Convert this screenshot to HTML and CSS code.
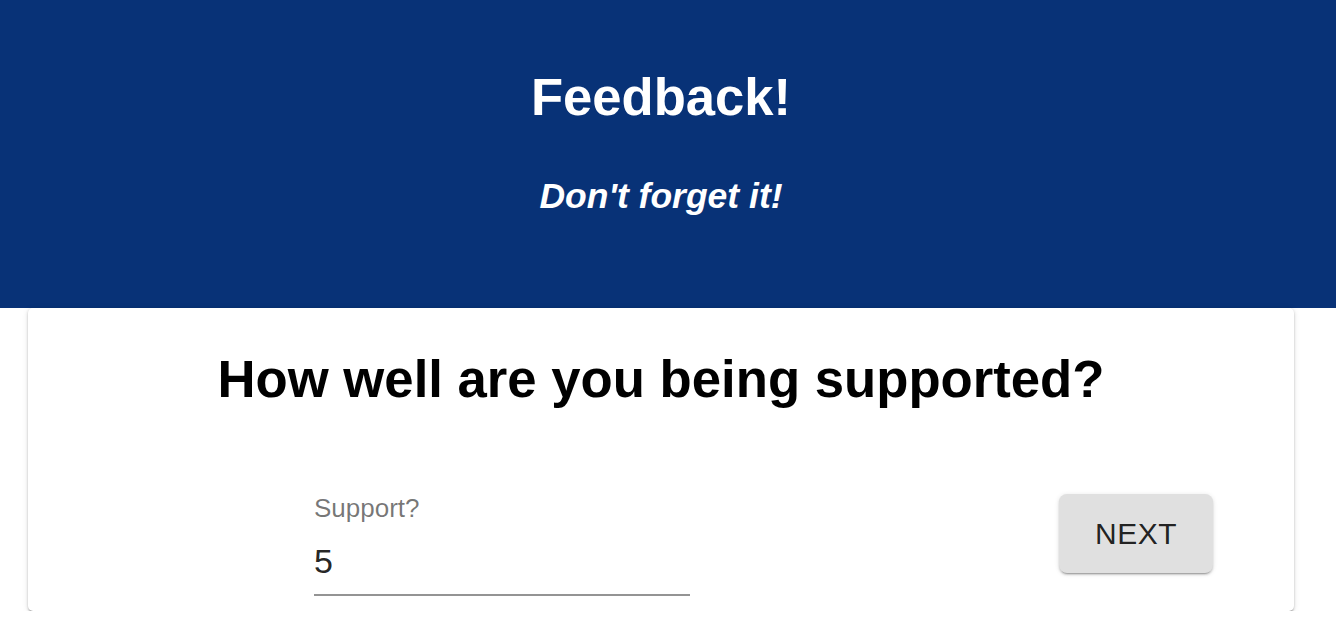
FILE: index.html
```html
<!DOCTYPE html>
<html lang="en">
<head>
<meta charset="utf-8">
<title>Feedback</title>
<link rel="stylesheet" href="styles.css">
</head>
<body>
<div class="page">
  <header class="hero">
    <h1 class="hero-title">Feedback!</h1>
    <p class="hero-sub">Don't forget it!</p>
  </header>
  <main class="card">
    <h2 class="card-title">How well are you being supported?</h2>
    <div class="form-row">
      <div class="field">
        <label class="field-label" for="support">Support?</label>
        <div class="field-input-wrap">
          <input class="field-input" id="support" type="text" value="5">
        </div>
      </div>
      <button class="btn" type="button">NEXT</button>
    </div>
  </main>
</div>
</body>
</html>
```
FILE: styles.css
```css
* { box-sizing: border-box; }
html, body {
  margin: 0;
  padding: 0;
  background: #ffffff;
  font-family: "Liberation Sans", Arial, Helvetica, sans-serif;
}
.page {
  width: 1336px;
}
.hero {
  background: #083277;
  height: 308px;
  padding: 67px 14px 0 0;
  text-align: center;
  color: #ffffff;
}
.hero-title {
  margin: 0;
  font-size: 52.6px;
  line-height: 60px;
  font-weight: 700;
}
.hero-sub {
  margin: 49px 0 0;
  font-size: 35.5px;
  line-height: 40px;
  font-weight: 700;
  font-style: italic;
}
.card {
  margin: 0 42px 0 28px;
  background: #ffffff;
  border-radius: 5px;
  box-shadow: 0 2px 2px -1px rgba(0,0,0,0.3), 0 1px 3px 0 rgba(0,0,0,0.16), 0 1px 6px 0 rgba(0,0,0,0.1);
  padding: 41px 0 15px;
}
.card-title {
  margin: 0 0 84px;
  text-align: center;
  font-size: 52.7px;
  line-height: 60px;
  font-weight: 700;
  color: #000000;
}
.form-row {
  display: flex;
  justify-content: space-between;
  align-items: flex-start;
  padding: 0 81px 0 286px;
}
.field {
  width: 376px;
  display: flex;
  flex-direction: column;
}
.field-label {
  font-size: 26px;
  line-height: 30px;
  color: rgba(0,0,0,0.54);
}
.field-input-wrap {
  margin-top: 18px;
  padding-bottom: 13px;
  border-bottom: 2px solid #949494;
}
.field-input {
  display: block;
  width: 100%;
  border: 0;
  outline: none;
  padding: 0;
  margin: 0;
  height: 40px;
  font-family: inherit;
  font-size: 34px;
  line-height: 40px;
  color: rgba(0,0,0,0.87);
  background: transparent;
}
.btn {
  margin-top: 1px;
  width: 154px;
  height: 79px;
  border: 0;
  border-radius: 8px;
  background: #e0e0e0;
  color: rgba(0,0,0,0.87);
  font-family: inherit;
  font-size: 30px;
  letter-spacing: 0.5px;
  box-shadow: 0 3px 1px -2px rgba(0,0,0,0.2), 0 2px 2px 0 rgba(0,0,0,0.14), 0 1px 5px 0 rgba(0,0,0,0.12);
  cursor: pointer;
}
```
